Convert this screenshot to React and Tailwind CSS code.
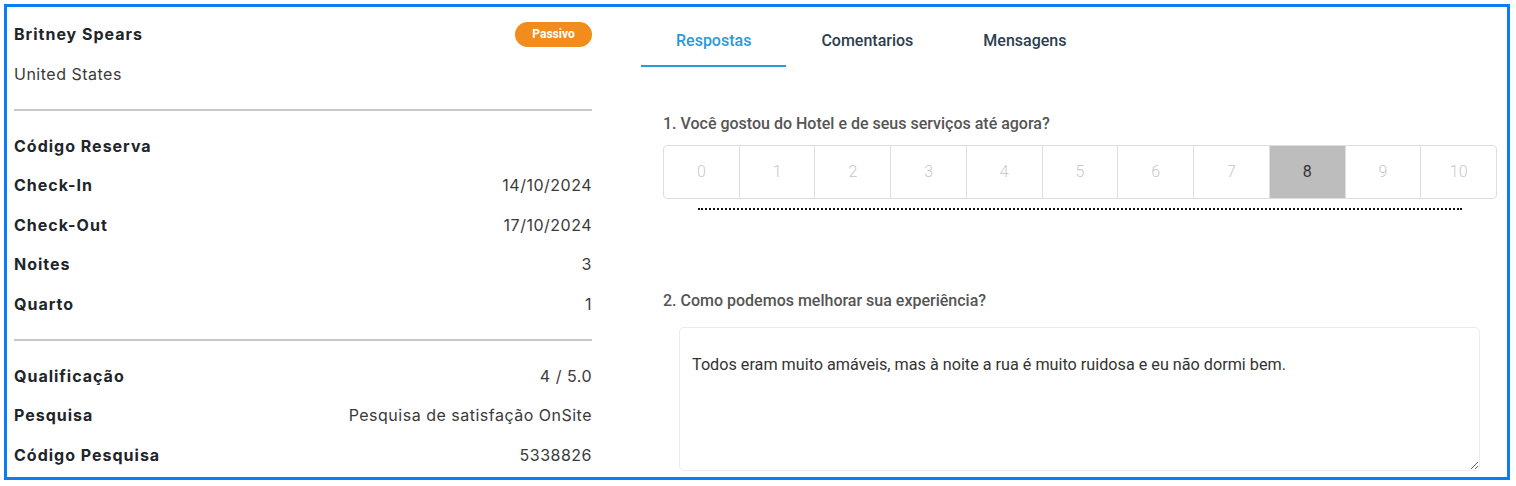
// App.jsx
import React from "react";

/* -----------------------------------------------------------------
   Data
   ----------------------------------------------------------------- */
const stayRows = [
  { label: "Código Reserva", value: "" },
  { label: "Check-In", value: "14/10/2024" },
  { label: "Check-Out", value: "17/10/2024" },
  { label: "Noites", value: "3" },
  { label: "Quarto", value: "1" },
];

const surveyRows = [
  { label: "Qualificação", value: "4 / 5.0" },
  { label: "Pesquisa", value: "Pesquisa de satisfação OnSite" },
  { label: "Código Pesquisa", value: "5338826" },
];

const tabs = ["Respostas", "Comentarios", "Mensagens"];
const scale = [0, 1, 2, 3, 4, 5, 6, 7, 8, 9, 10];
const selectedScore = 8;

/* -----------------------------------------------------------------
   Small pieces
   ----------------------------------------------------------------- */
const InfoRow = ({ label, value }) => (
  <div className="h-[39.5px] flex items-center justify-between">
    <span className="font-bold text-[16px] tracking-[1px] text-[#212529]">
      {label}
    </span>
    <span className="text-[16px] tracking-[0.5px] text-[#3a3a3a]">{value}</span>
  </div>
);

const Divider = ({ className = "" }) => (
  <div className={`h-[2px] bg-[#c5c7ca] ${className}`} />
);

/* -----------------------------------------------------------------
   Main App component
   ----------------------------------------------------------------- */
export default function App() {
  return (
    <div className="bg-white w-[1516px] h-[486px] pt-[4px] pl-[4px]">
      <div className="w-[1506px] h-[476px] border-[3px] border-[#0b7df4] flex overflow-hidden">
        {/* ------------------- LEFT: guest details ------------------- */}
        <aside
          className="w-[578px] ml-[7px] pt-[7px] shrink-0"
          style={{ fontFamily: "Inter, 'Noto Sans', sans-serif" }}
        >
          <div className="h-10 flex items-center justify-between">
            <span className="font-bold text-[16px] tracking-[1px] text-[#212529]">
              Britney Spears
            </span>
            <span
              className="h-[25px] w-[77px] rounded-full bg-[#f28c1c] text-white text-[12px] font-bold flex items-center justify-center"
              style={{ fontFamily: "Roboto, sans-serif" }}
            >
              Passivo
            </span>
          </div>
          <div className="h-[39px] flex items-center text-[16px] tracking-[0.5px] text-[#3a3a3a]">
            United States
          </div>

          <Divider className="mt-[16px] mb-[15px]" />
          {stayRows.map((r) => (
            <InfoRow key={r.label} {...r} />
          ))}

          <Divider className="mt-[15.5px] mb-[15px]" />
          {surveyRows.map((r) => (
            <InfoRow key={r.label} {...r} />
          ))}
        </aside>

        {/* ------------------- RIGHT: answers ------------------- */}
        <main
          className="flex-1 ml-[49px] mr-[10px]"
          style={{ fontFamily: "Roboto, sans-serif" }}
        >
          {/* tabs */}
          <div className="flex mt-[16px]">
            {tabs.map((t, i) => (
              <div
                key={t}
                className={`px-[35px] pt-[8px] pb-[14px] leading-[20px] text-[16px] font-medium border-b-2 ${
                  i === 0
                    ? "text-[#2b9ad6] border-[#2b9ad6]"
                    : "text-[#2c3e50] border-transparent"
                }`}
              >
                {t}
              </div>
            ))}
          </div>

          <div className="pl-[22px]">
            {/* question 1 */}
            <p className="mt-[47px] leading-[20px] text-[16px] font-medium text-[#555]">
              1. Você gostou do Hotel e de seus serviços até agora?
            </p>
            <div className="mt-[11px] h-[54px] flex border border-[#dedede] rounded-[4px] overflow-hidden">
              {scale.map((n) => (
                <div
                  key={n}
                  className={`flex-1 flex items-center justify-center text-[16px] font-light border-l first:border-l-0 border-[#dedede] ${
                    n === selectedScore
                      ? "bg-[#bdbdbd] text-[#333] font-normal"
                      : "text-[#c8c8c8]"
                  }`}
                >
                  {n}
                </div>
              ))}
            </div>
            <div className="mx-[35px] mt-[9px] border-t-2 border-dotted border-[#111]" />

            {/* question 2 */}
            <p className="mt-[81px] leading-[20px] text-[16px] font-medium text-[#555]">
              2. Como podemos melhorar sua experiência?
            </p>
            <div className="pl-[16px] pr-[17px] mt-[16px]">
              <textarea
                readOnly
                defaultValue="Todos eram muito amáveis, mas à noite a rua é muito ruidosa e eu não dormi bem."
                className="w-full h-[144px] border border-[#ebebeb] rounded-[5px] pl-[12px] pt-[26px] leading-[22px] text-[16.2px] text-[#333] outline-none resize-y"
                style={{ fontFamily: "Roboto, sans-serif" }}
              />
            </div>
          </div>
        </main>
      </div>
    </div>
  );
}
